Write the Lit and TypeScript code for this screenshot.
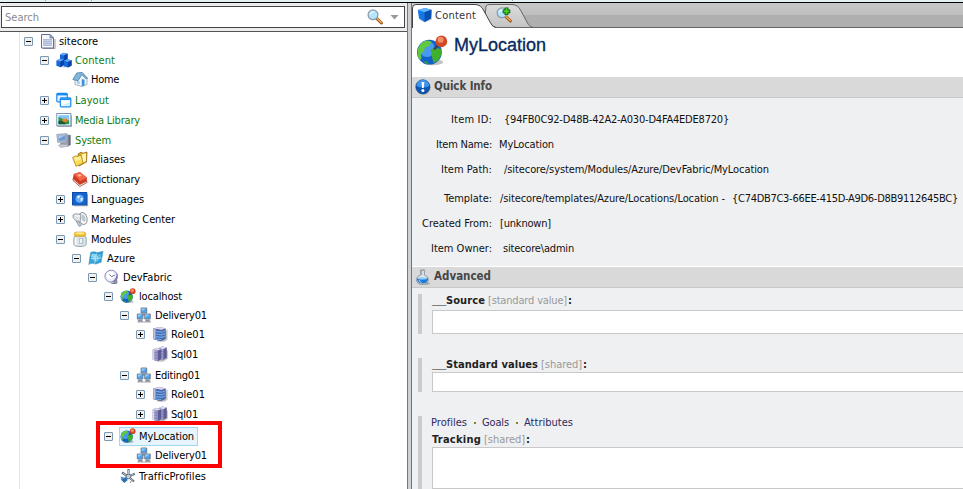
import { LitElement, html, css, svg, TemplateResult } from "lit";
import { customElement, property } from "lit/decorators.js";

/* Label whose tracking is adjusted so that it fills a given width. */
@customElement("fit-text")
class FitText extends LitElement {
  @property({ type: Number }) w = 0;
  @property() text = "";
  static styles = css`
    :host { display: inline-block; white-space: pre; flex: none; }
    .label { display: inline-block; }
  `;
  render() {
    return html`<span class="label">${this.text}</span>`;
  }
  updated() {
    const el = this.renderRoot.querySelector(".label") as HTMLElement;
    el.style.letterSpacing = "0px";
    const natural = el.getBoundingClientRect().width;
    el.style.letterSpacing = (this.w - natural) / this.text.length + "px";
    this.style.width = this.w + "px";
  }
}

const server = (x: number, y: number) => svg`
  <path d="M${x} ${y}l3.600-1.600 4.800 1v10.200l-3.400 2-5-1.400z" fill="#5d5b94"/>
  <path d="M${x} ${y}l3.600-1.600 4.800 1-3.400 1.600z" fill="#dddcf2"/>
  <path d="M${x} ${y}l5 1v10.600l-5-1.400z" fill="#a09ecb"/>
  <path d="M${x} ${y}l1.500.3v10.300l-1.500-.4z" fill="#d6d5ee"/>
  <path d="M${x + 1.5} ${y + 3}l3 .6M${x + 1.5} ${y + 5.6}l3 .6M${x + 1.5} ${y + 8.2}l3 .6" stroke="#716fab" stroke-width=".8"/>`;

const pc = (x: number, y: number) => svg`
  <rect x="${x}" y="${y}" width="6.600" height="6" rx="1" fill="#758190"/>
  <rect x="${x + 1}" y="${y + 0.8}" width="4.600" height="4.200" fill="#4aa3ef"/>
  <path d="M${x + 1} ${y + 0.8}h4.600l-4.600 2.800z" fill="#93cbf8"/>
  <path d="M${x + 1.6} ${y + 6}h3.600l1 2.200h-5.400z" fill="#88929e"/>`;

const cube = (x: number, y: number) => svg`
  <path d="M${x} ${y + 1.4}l3.600-1.600 4 1v5.200l-3.600 2.200-4-1.400z" fill="#1667d8"/>
  <path d="M${x} ${y + 1.4}l3.600-1.600 4 1-3.600 1.800z" fill="#62a9fa"/>
  <path d="M${x + 4} ${y + 2.6}l3.600-1.800v5.200l-3.600 2.200z" fill="#0b44a8"/>`;

const globe = svg`
  <ellipse cx="8.400" cy="13.600" rx="5.200" ry="1.500" fill="#888" opacity=".5"/>
  <circle cx="6.700" cy="8.600" r="6.200" fill="#1560c8"/>
  <circle cx="5.500" cy="7" r="4" fill="#479af0"/>
  <path d="M.8 8.200C1 5.200 3 3.200 5.500 2.700l2.300.6-1.200 2.200-2.100.7-.6 2-1.600 1.200.5 2-.8 1.300C1.200 11.800.7 10 .8 8.200z" fill="#62c93c"/>
  <path d="M7.300 7.300l2.600-.9 2.700.7.200 2.400-1.700 3.200-2.300 1.300-.8-3z" fill="#3fb02c"/>
  <path d="M3.700 13.200l2 .1.700 1.200-1.500-.2z" fill="#39a52a"/>
  <path d="M9 7.200l2.800-3" stroke="#39424f" stroke-width="1.200"/>
  <circle cx="12.700" cy="3.200" r="2.900" fill="#d04a26"/>
  <circle cx="12.300" cy="2.400" r="1.500" fill="#f2906c"/>`;

const lens = svg`
  <path d="M10 9.600l4.400 4.400" stroke="#9b5412" stroke-width="3" stroke-linecap="round"/>
  <path d="M10 9.300l4.200 4.200" stroke="#f3a850" stroke-width="1.500" stroke-linecap="round"/>
  <circle cx="6" cy="5.800" r="4.900" fill="#b5e4fb" stroke="#8c9bab" stroke-width="1.300"/>
  <path d="M2.600 5.600a3.500 3.500 0 0 1 5-2.800z" fill="#eefaff"/>`;

const ICONS: Record<string, TemplateResult> = {
  doc: svg`
    <path d="M3 15.500h12V6" stroke="#999" fill="none"/>
    <path d="M1.500 1.500h8.500l3.500 3.500v10h-12z" fill="#f6f8fd" stroke="#626f93"/>
    <path d="M3 6h9v7h-9z" fill="#c6cfe8"/>
    <path d="M10 1.500v3.500h3.500z" fill="#aab6d6" stroke="#626f93" stroke-width=".8"/>
    <path d="M3 6.500h9M3 8.500h9M3 10.500h9M3 12.500h9" stroke="#a3b0d3" stroke-width=".7"/>`,
  cubes: svg`
    <path d="M3 14.500l5 1 7.500-1.500-2-2z" fill="#999" opacity=".5"/>
    ${cube(4, 1)}${cube(0.4, 7)}${cube(8, 7.4)}`,
  home: svg`
    <path d="M3 8v5.500l7 2 5-2V7l-5-4.500z" fill="#eef4fa" stroke="#8595a6" stroke-width=".7"/>
    <path d="M.8 8.500L4.700 2l5.500-.6 5.300 5.800-1.500.6-4.200-4.200L6 9.800z" fill="#82b7dc" stroke="#4d7f9f" stroke-width=".8"/>
    <path d="M9.800 8.200l2.700.3v6l-2.700.8z" fill="#3b8fd6"/>
    <path d="M5 10l2.600.5v2.600L5 12.400z" fill="#8fc6ee"/>`,
  layout: svg`
    <rect x=".8" y="1.300" width="10.500" height="8.500" rx="1" fill="#e6f4ff" stroke="#168af0" stroke-width="1.200"/>
    <path d="M1 2.600h10" stroke="#168af0" stroke-width="1.600"/>
    <rect x="4.300" y="5.800" width="10.500" height="9" rx="1" fill="#fff" stroke="#1388ef" stroke-width="1.200"/>
    <path d="M4.500 7.200h10" stroke="#168af0" stroke-width="1.800"/>
    <path d="M5.500 13.700l8.500-4v4z" fill="#d4ebff"/>`,
  media: svg`
    <path d="M1.500 14.500h14V3.500" stroke="#aaa" fill="none"/>
    <rect x=".8" y="1.500" width="14" height="12.300" fill="#fff" stroke="#7593bb"/>
    <rect x="2.500" y="3.200" width="10.700" height="9" fill="#82c8f3"/>
    <path d="M2.500 4.900l3.500 1.700 7.200 2v3.600H2.500z" fill="#359449"/>
    <path d="M2.500 9.100l4.500-.3 3 3.400H2.500z" fill="#145c35"/>
    <ellipse cx="8.900" cy="8.200" rx="2.800" ry="1.700" fill="#f0802b"/>`,
  system: svg`
    <path d="M10 2l4.500 1v10L11 14.500 8 13z" fill="#999fae"/>
    <path d="M14.500 3v10l-2 1V3.500z" fill="#626a7d"/>
    <path d="M.8 2.500l9.700-.9.5 7.800-9.200 1z" fill="#c2c8d4" stroke="#848d9d" stroke-width=".7"/>
    <path d="M2 3.700l7.500-.7.300 5.300-7 .8z" fill="#6f9ad6"/>
    <path d="M2 3.700l7.500-.7-6.900 4z" fill="#a9c6ea"/>
    <path d="M4.500 10.500l3.500-.3 1.500 2-5.500.5z" fill="#8e97a5"/>
    <path d="M2.500 13l8-.8 2 2-8 1.300z" fill="#c9cdd5" stroke="#8a8f9b" stroke-width=".5"/>`,
  folder: svg`
    <path d="M6 3l3-1.800 2 1 4-1.200-.5 10L7 15z" fill="#d8a317" stroke="#876012" stroke-width=".7"/>
    <path d="M7 4.500l7-2.500v8l-7 4z" fill="#fff4b0"/>
    <path d="M.6 6.500l2.900-1.700 1.600.7 4.300-1.200L11 12.500l-7 2.800z" fill="#fbdc55" stroke="#9b7413" stroke-width=".7"/>
    <path d="M2.300 7l6-1.800.7 3-5.800 2z" fill="#fff0a0"/>`,
  book: svg`
    <path d="M1 7.500l6.500 6 7.300-3.500.3 1.500-7.300 4L1 9.500z" fill="#eee3da" stroke="#9f3524" stroke-width=".7"/>
    <path d="M.8 7.500L1.800 3l6-2L14.900 6.500v3.500L7.800 13.400z" fill="#cf3a20"/>
    <path d="M1.800 3l6-2L14.900 6.800 8.300 10z" fill="#f26546"/>
    <path d="M5 4l2.800-1 2.200 1.600L7.300 5.800z" fill="#ffb59d"/>`,
  flag: svg`
    <path d="M2 14.800h13.500V3" stroke="#aaa" fill="none"/>
    <rect x=".5" y="1.500" width="14.200" height="12.400" fill="#1463cf" stroke="#0b4ba9"/>
    <circle cx="7.600" cy="7.700" r="4" fill="#65adf5"/>
    <path d="M5 5.700l2-1.500 1 1.600-1.500 2zM8.500 7.200l2.500-.4-.7 2.700-1.600 1z" fill="#e0f2ff"/>`,
  horn: svg`
    <ellipse cx="11" cy="7.500" rx="4" ry="6" fill="#f8f9fb" stroke="#9199a4" transform="rotate(-15 11 7.500)"/>
    <path d="M1 4l2.500-1.300L9 3.600l-.8 7-2.700.7L1.200 7z" fill="#dfe3e8" stroke="#858e99" stroke-width=".8"/>
    <path d="M4 9.800l3 .8 2.300 4-2.300.8z" fill="#c1c8d0" stroke="#858e99" stroke-width=".7"/>
    <ellipse cx="11.500" cy="7.300" rx="1.900" ry="3.600" fill="#c0c6ce" transform="rotate(-15 11.500 7.300)"/>
    <path d="M3 4.800l5 .2" stroke="#fff"/>`,
  jar: svg`
    <path d="M3 5Q1.800 6 1.800 8v5q0 2.500 6.200 2.500t6.200-2.500V8q0-2-1.200-3z" fill="#dce5e9" stroke="#85949d" stroke-width=".8"/>
    <path d="M3.600 6.500v7.300" stroke="#fff" stroke-width="1.500"/>
    <path d="M7 7h4.500v6H7z" fill="#b3c6cf"/><path d="M8 8h2v4H8z" fill="#eff5f7"/>
    <rect x="2.200" y="1" width="11.600" height="4.200" rx="2" fill="#f5c32c" stroke="#c78e12" stroke-width=".5"/>
    <ellipse cx="8" cy="2.300" rx="4.500" ry="1" fill="#ffeb91"/>`,
  azure: svg`
    <path d="M2.600 2.500c3-1.700 4.700-.2 6.500 0s3.500-1 6-1.200L13 12.500c-2.500 0-3.500 1.700-6 1.500-2-.3-3-1.500-6.200.5z" fill="#1e91c8" stroke="#5eabd0" stroke-width=".7"/>
    <path d="M3.500 4c2-1 3-.4 4.500.1L7.300 8c-1.600-.6-2.800-.8-4.400-.3z" fill="#8bd5f3"/>
    <path d="M9 4.500l4.500-1-.8 4.200-4.300.6z" fill="#55bce5"/>
    <path d="M2.600 9q2-.7 4.400 0l-.6 3.700q-2-.9-4.500 0zM8.200 9.400l4.200-.6-.6 3q-1.600.2-4.300 1.300z" fill="#3faadd"/>
    <path d="M8.500 3.500l-1.800 10M2.800 8.500q5 .5 10.500-.5" stroke="#d8f4ff" stroke-width=".8" fill="none"/>
    <circle cx="7.800" cy="8.300" r="2.200" fill="none" stroke="#c6effc" stroke-width=".7"/>`,
  dish: svg`
    <path d="M6 15l5-2 2.500 2z" fill="#777d90"/><path d="M9 13l4-4 .5 5z" fill="#83869b"/>
    <ellipse cx="7.200" cy="7.200" rx="6.300" ry="6" fill="#ededfa" stroke="#8e8cb5"/>
    <path d="M12.800 3.500q2.600 5.500-2.600 9.300l-4 .5q6.500-2 6.600-9.800z" fill="#7c7aab"/>
    <ellipse cx="6.300" cy="6.300" rx="3.800" ry="3.500" fill="#fff"/>
    <path d="M5.500 5.500l2 2.200L10.800 6" stroke="#6f7193" fill="none"/>`,
  globe,
  farm: svg`
    <path d="M1.500 15h13.500" stroke="#999" stroke-width="1.400" opacity=".6"/>
    ${pc(4.6, 0.6)}${pc(0.8, 6.6)}${pc(8.2, 6.6)}`,
  role: svg`
    <path d="M4.500 15.500l8 .2 3-2V3z" fill="#999" opacity=".6"/>
    <path d="M1.500 2.500L7 1l6.500 1.300v10.400L9 15.200l-7.500-2z" fill="#62618e"/>
    <path d="M1.500 2.500L7 1l6.500 1.300L9.500 4z" fill="#dad9f0"/>
    <path d="M1.500 2.500l8 1.500 4-1.200v10L9 15l-7.500-2z" fill="#55669f"/>
    <path d="M1.500 2.500l2 .5v10.500l-2-.5z" fill="#c4c4e2"/>
    <path d="M4 5.400l5.500.8 3.500-1.200M4 8l5.500.8L13 7.600M4 10.600l5.500.8 3.500-1.200M4 13l5.500.8" stroke="#62adf7" stroke-width="1.200" fill="none"/>`,
  sql: svg`<path d="M5 15.500l6 .2 4.800-3V4z" fill="#999" opacity=".6"/>${server(6.4, 2.2)}${server(0.8, 3.6)}`,
  traffic: svg`
    <path d="M8.500 1v7.500M2 4.500l6 4M8.300 8.500l6.500-2.800M8.300 8.500l5.700 5" stroke="#5c6b79" stroke-width="2.200"/>
    <path d="M8.500 2v6.500M3 5.200l5 3.300 5.500-2.400M8.300 8.500l5 4.300" stroke="#b7c8d6" stroke-width="1" fill="none"/>
    <circle cx="8.500" cy="8.500" r="2.300" fill="#c4d1dc" stroke="#526575" stroke-width=".8"/>
    <path d="M.8 11.500l5-2.500 2 3-3.500 3z" fill="#2f6eaf"/><path d="M.8 8.500l3 .7-1 2.300-2-1z" fill="#4b91d2"/>
    <path d="M10 15l1.500-2.500" stroke="#888"/>`,
  lens,
  addlens: svg`${lens}<path d="M10.500 .500v7.600M6.700 4.300h7.600" stroke="#075c08" stroke-width="3.800"/><path d="M10.500 1.300v6M7.500 4.300h6" stroke="#49d529" stroke-width="1.800"/>`,
  cube: svg`
    <path d="M3 13l5 2.500 7-3V5z" fill="#888" opacity=".4"/>
    <path d="M.8 3L8 1l6.500 1.800-.5 8.700L7.500 15 2 11.500z" fill="#1478e5"/>
    <path d="M.8 3L8 1l6.500 1.800L7.500 5.200z" fill="#63b6fc"/>
    <path d="M7.500 5.200l7-2.400-.5 8.700L7.500 15z" fill="#0850b2"/>`,
  alert: svg`
    <circle cx="8.300" cy="8.600" r="7.200" fill="#777" opacity=".6"/>
    <circle cx="7.800" cy="7.800" r="7" fill="#0d56b5" stroke="#0a3f8e" stroke-width=".7"/>
    <path d="M1.500 7a6.300 6.300 0 0 1 12.600 0q-6 3-12.600 0z" fill="#3f94ec"/>
    <path d="M6.500 3h2.800l-.6 6H7.100z" fill="#fff"/><circle cx="7.900" cy="11.600" r="1.500" fill="#fff"/>`,
  flask: svg`
    <ellipse cx="9" cy="14.400" rx="6" ry="1.400" fill="#777" opacity=".55"/>
    <path d="M5.600 1h3.800v5q4 1.300 4 4.500 0 4.700-6 4.700t-6-4.700q0-3.200 4.200-4.500z" fill="#e3e9ee" stroke="#87909a" stroke-width=".9"/>
    <path d="M2 9.200q5 1.300 10.900-.2.700 5.200-5.400 5.400-6.200-.2-5.500-5.200z" fill="#1d78d4"/>
    <ellipse cx="7.400" cy="9.300" rx="4.700" ry="1.200" fill="#9ccef7"/>
    <path d="M4.800 1.300h5.400M6.800 2v4.500" stroke="#9aa3ac"/>
    <path d="M4 11q.5 2 2.500 2.300" stroke="#b6dcfb" fill="none"/>`,
};

const icon = (name: string, cls = "icon") => html`<svg class=${cls} viewBox="0 0 16 16">${ICONS[name]}</svg>`;

interface Row { t: string; w: number; l: number; i: string; e?: string; gap?: number; green?: boolean; sel?: boolean }
const ROWS: Row[] = [
  { t: "sitecore", w: 39, l: 0, i: "doc", e: "-" },
  { t: "Content", w: 40, l: 1, i: "cubes", e: "-", green: true },
  { t: "Home", w: 28, l: 2, i: "home" },
  { t: "Layout", w: 34, l: 1, i: "layout", e: "+", green: true, gap: 2 },
  { t: "Media Library", w: 65, l: 1, i: "media", e: "+", green: true, gap: 1 },
  { t: "System", w: 36, l: 1, i: "system", e: "-", green: true, gap: 1 },
  { t: "Aliases", w: 34, l: 2, i: "folder" },
  { t: "Dictionary", w: 49, l: 2, i: "book", gap: 1 },
  { t: "Languages", w: 53, l: 2, i: "flag", e: "+", gap: 1 },
  { t: "Marketing Center", w: 84, l: 2, i: "horn", e: "+", gap: 1 },
  { t: "Modules", w: 40, l: 2, i: "jar", e: "-", gap: 1 },
  { t: "Azure", w: 28, l: 3, i: "azure", e: "-" },
  { t: "DevFabric", w: 49, l: 4, i: "dish", e: "-" },
  { t: "localhost", w: 43, l: 5, i: "globe", e: "-" },
  { t: "Delivery01", w: 52, l: 6, i: "farm", e: "-" },
  { t: "Role01", w: 34, l: 7, i: "role", e: "+" },
  { t: "Sql01", w: 27, l: 7, i: "sql", gap: 1 },
  { t: "Editing01", w: 45, l: 6, i: "farm", e: "-", gap: 2 },
  { t: "Role01", w: 34, l: 7, i: "role", e: "+" },
  { t: "Sql01", w: 27, l: 7, i: "sql", e: "+", gap: 1 },
  { t: "MyLocation", w: 55, l: 5, i: "globe", e: "-", gap: 3, sel: true },
  { t: "Delivery01", w: 52, l: 6, i: "farm" },
  { t: "TrafficProfiles", w: 67, l: 5, i: "traffic", gap: 2 },
];

const INFO = [
  { k: "Item ID:", kw: 41, v: "{94FB0C92-D48B-42A2-A030-D4FA4EDE8720}", vw: 225, x: 5, h: 25 },
  { k: "Item Name:", kw: 56, v: "MyLocation", vw: 55, x: 0, h: 25 },
  { k: "Item Path:", kw: 51, v: "/sitecore/system/Modules/Azure/DevFabric/MyLocation", vw: 265, x: 5, h: 25 },
  { k: "Template:", kw: 48, v: "/sitecore/templates/Azure/Locations/Location -", vw: 225, x: 1, h: 33, v2: "{C74DB7C3-66EE-415D-A9D6-D8B9112645BC}", v2w: 226 },
  { k: "Created From:", kw: 70, v: "[unknown]", vw: 51, x: 1, h: 17 },
  { k: "Item Owner:", kw: 61, v: "sitecore\\admin", vw: 71, x: 4, h: 33 },
];

@customElement("app-root")
class AppRoot extends LitElement {
  static styles = css`
    :host { display: flex; flex-direction: column; width: 963px; height: 489px; overflow: hidden; background: #fff;
      font: 11px/14px "DejaVu Sans Condensed", "Noto Sans", sans-serif; color: #000; position: relative; }
    * { box-sizing: border-box; }
    svg { display: block; flex: none; }
    .icon { width: 16px; height: 16px; }
    .top { height: 3px; flex: none; background: #e4f1f3; border-bottom: 1px solid #000; display: flex; }
    .tick { width: 1px; height: 1px; background: #8aa; margin-left: 45px; }
    .tick.far { margin-left: 420px; }
    .main { display: flex; flex: 1; min-height: 0; }
    .left { width: 407px; display: flex; flex-direction: column; }
    .searchbar { height: 29px; flex: none; background: #ececec; border-bottom: 1px solid #555; padding: 3px 2px 3px 1px; }
    .search { height: 22px; background: #fff; border: 1px solid #444; display: flex; align-items: center; padding: 0 5px 0 3px; color: #8a8a8a; }
    .search fit-text { padding-top: 2px; }
    .search .icon { margin-left: auto; }
    .caret { width: 9px; height: 5px; margin-left: 7px; background: #999; clip-path: polygon(0 0, 100% 0, 50% 100%); }
    .tree { flex: 1; margin-left: 19px; border-left: 1px solid #e4e4e4; display: flex; flex-direction: column; }
    .row { height: 19px; flex: none; display: flex; align-items: center; padding-left: 4px; }
    .exp, .noexp { width: 9px; height: 9px; flex: none; margin-right: 6px; }
    .node { display: flex; align-items: center; gap: 3px; height: 19px; border: 1px solid transparent; padding-right: 2px; }
    .node .icon { margin-top: -1px; }
    .sel { background: #e6f5fd; border-color: #a0d8f0; padding-right: 3px; }
    .green { color: #107c10; }
    .callout { position: absolute; left: 96px; top: 421px; width: 126px; height: 47px; border: 4px solid #f00; }
    .splitter { width: 5px; flex: none; background: #cdd0d5; border-left: 1px solid #777; border-right: 1px solid #70757b; }
    .right { flex: 1; min-width: 0; display: flex; flex-direction: column; background: #eff0f2; }
    .tabs { height: 25px; flex: none; display: flex; position: relative; }
    .tabbg { position: absolute; inset: 0; width: 551px; height: 25px; }
    .tablabels { position: relative; display: flex; align-items: center; padding: 0 0 1px 5px; color: #333; }
    .tablabels .t { margin-left: 2px; padding-top: 1px; }
    .tablabels .second { margin-left: 20px; }
    .head { height: 49px; flex: none; background: #fff; display: flex; padding: 7px 0 0 4px; }
    .big { width: 32px; height: 32px; }
    .title { font: 18px/20px "Liberation Sans", Arial, sans-serif; color: #072b61; margin: 0 0 0 6px; -webkit-text-stroke: .35px #072b61; }
    .section { height: 21px; flex: none; background: #d9d9d9; border-bottom: 1px solid #c6c7ca; display: flex; align-items: center; padding: 0 0 1px 3px; font-weight: bold; font-size: 11.5px; color: #474747; gap: 3px; }
    .adv { border-top: 1px solid #fff; height: 22px; }
    .section fit-text { margin-top: -1px; }
    .info { height: 168px; flex: none; padding-top: 9px; display: flex; flex-direction: column; color: #111; }
    .irow { display: flex; align-items: center; flex: none; }
    .key { width: 80px; display: flex; justify-content: flex-end; margin-right: 7px; }
    .v2 { margin-left: 7px; }
    .field { flex: none; margin-left: 6px; border-left: 4px solid #ccc; padding-left: 10px; display: flex; flex-direction: column; }
    .cap { display: flex; font-weight: bold; color: #222; height: 14px; flex: none; }
    .under { font-family: "Liberation Sans", Arial, sans-serif; font-size: 13px; margin-top: -1px; }
    .hint { font-weight: normal; color: #999; margin: 0 1px 0 3px; }
    .box { flex: 1; background: #fff; border: 1px solid #c8c8c8; border-right: 0; }
    .f1 { height: 40px; margin-top: 6px; } .f1 .cap { height: 16px; }
    .f2 { height: 34px; margin-top: 24px; }
    .f3 { height: 73px; margin-top: 24px; }
    .f3 .cap { height: 14px; margin-top: 3px; }
    .links { display: flex; height: 14px; color: #2e2a5c; margin-left: -1px; }
    .dot { width: 2px; height: 2px; background: #927a2c; margin: 6px 6px 0 7px; }
  `;

  fit(text: string, w: number, cls = "") {
    return html`<fit-text class=${cls} .text=${text} .w=${w}></fit-text>`;
  }

  expander(kind?: string) {
    if (!kind) return html`<span class="noexp"></span>`;
    return html`<svg class="exp" viewBox="0 0 9 9">
      <rect x=".5" y=".5" width="8" height="8" rx=".5" fill="#f1f0ec" stroke="#7898b5"/>
      <path d=${kind === "+" ? "M2 4.500h5M4.500 2v5" : "M2 4.500h5"} stroke="#000"/></svg>`;
  }

  cap(parts: [string, number][], hint: string, hw: number) {
    return html`<div class="cap">${parts.map(([t, w]) => this.fit(t, w, t === "__" ? "under" : ""))}${this.fit(hint, hw, "hint")}<span>:</span></div>`;
  }

  render() {
    return html`
      <div class="top"><i class="tick"></i><i class="tick"></i><i class="tick far"></i></div>
      <div class="main">
        <div class="left">
          <div class="searchbar"><div class="search">${this.fit("Search", 34)}${icon("lens")}<span class="caret"></span></div></div>
          <div class="tree">
            ${ROWS.map((r) => html`
              <div class="row" style="margin-left:${r.l * 16}px;margin-top:${r.gap ?? 0}px">
                ${this.expander(r.e)}
                <span class="node ${r.sel ? "sel" : ""} ${r.green ? "green" : ""}">${icon(r.i)}${this.fit(r.t, r.w)}</span>
              </div>`)}
          </div>
        </div>
        <div class="splitter"></div>
        <div class="right">
          <div class="tabs">
            <svg class="tabbg" viewBox="0 0 551 25">
              <defs><linearGradient id="g" x2="0" y2="1"><stop offset="0" stop-color="#c9c9c9"/><stop offset="1" stop-color="#bebebe"/></linearGradient>
              <linearGradient id="h" x2="0" y2="1"><stop offset="0" stop-color="#dcdcdc"/><stop offset="1" stop-color="#c4c4c4"/></linearGradient></defs>
              <rect width="551" height="12" fill="url(#g)"/>
              <rect y="12" width="551" height="12" fill="#afafaf"/>
              <rect y="24" width="551" height="1" fill="#666"/>
              <path d="M72 24.500L74 3Q75 1.500 78 1.500H100Q106 1.500 109 8L115 19Q117 24 122 24.500z" fill="url(#h)" stroke="#666"/>
              <path d="M0 25V5Q0 1.500 4 1.500H63Q69 1.500 72 8L78 19Q80 24 84 25z" fill="#fff"/>
              <path d="M.5 25V5Q.5 1.500 4 1.500H63Q69 1.500 72 8L78 19Q80 24 84 24.500" fill="none" stroke="#444"/>
            </svg>
            <div class="tablabels">${icon("cube")}${this.fit("Content", 41, "t")}${icon("addlens", "icon second")}</div>
          </div>
          <div class="head">${icon("globe", "big")}<h1 class="title">${this.fit("MyLocation", 92)}</h1></div>
          <div class="section">${icon("alert")}${this.fit("Quick Info", 58)}</div>
          <div class="info">
            ${INFO.map((r) => html`
              <div class="irow" style="height:${r.h}px">
                <span class="key">${this.fit(r.k, r.kw)}</span>
                <span style="margin-left:${r.x}px">${this.fit(r.v, r.vw)}</span>
                ${r.v2 ? this.fit(r.v2, r.v2w!, "v2") : ""}
              </div>`)}
          </div>
          <div class="section adv">${icon("flask")}${this.fit("Advanced", 57)}</div>
          <div class="field f1">${this.cap([["__", 14], ["Source", 39]], "[standard value]", 79)}<div class="box"></div></div>
          <div class="field f2">${this.cap([["__", 14], ["Standard values", 92]], "[shared]", 41)}<div class="box"></div></div>
          <div class="field f3">
            <div class="links">${this.fit("Profiles", 36)}<i class="dot"></i>${this.fit("Goals", 27)}<i class="dot"></i>${this.fit("Attributes", 49)}</div>
            ${this.cap([["Tracking", 49]], "[shared]", 41)}<div class="box"></div>
          </div>
        </div>
      </div>
      <div class="callout"></div>`;
  }
}
